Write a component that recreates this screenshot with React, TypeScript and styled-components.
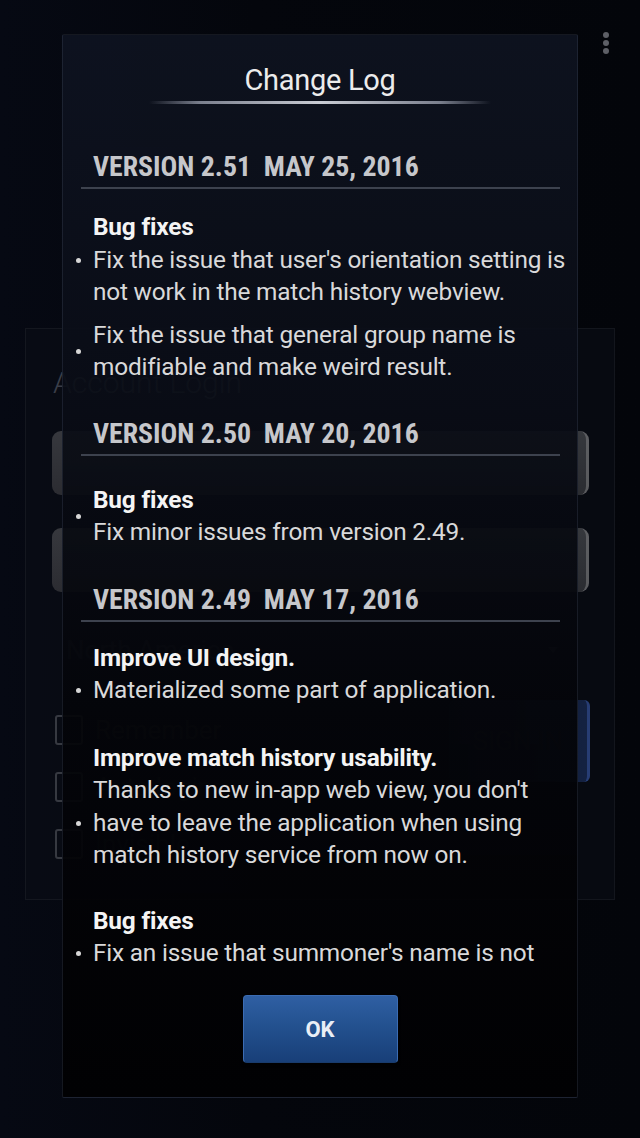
import React from "react";
import styled, { createGlobalStyle } from "styled-components";

const Global = createGlobalStyle`
  html, body { margin: 0; padding: 0; background: #03050a; }
  body { font-family: Roboto, "Noto Sans", "Liberation Sans", sans-serif; }
  #root { width: 640px; }
`;

const Page = styled.div`
  position: relative;
  width: 640px;
  height: 1138px;
  overflow: hidden;
  background: linear-gradient(90deg, #060913 0%, #04060c 40%, #03050a 100%);
  display: flex;
  flex-direction: column;
  align-items: stretch;
`;

const MenuDots = styled.div`
  position: absolute;
  top: 32px;
  right: 31px;
  display: flex;
  flex-direction: column;
  gap: 2px;
`;

const Dot = styled.span`
  width: 6px;
  height: 6px;
  border-radius: 50%;
  background: #5d5f66;
`;

/* ---------- login page behind the dialog ---------- */
const LoginCard = styled.div`
  margin: 328px 25px 0;
  height: 572px;
  box-sizing: border-box;
  border: 1px solid rgba(255, 255, 255, 0.05);
  background: rgba(10, 13, 22, 0.6);
  padding: 36px 26px 0 26px;
  display: flex;
  flex-direction: column;
`;

const LoginTitle = styled.div`
  font-size: 30px;
  font-weight: 300;
  color: #3a3e48;
  line-height: 36px;
  margin-left: 1px;
`;

const Field = styled.div<{ $mt: number }>`
  height: 64px;
  box-sizing: border-box;
  margin-top: ${(p) => p.$mt}px;
  margin-right: -1px;
  border-radius: 9px;
  background: linear-gradient(180deg, rgba(70, 72, 76, 0.75), rgba(55, 56, 60, 0.75));
  border-right: 3px solid rgba(120, 120, 124, 0.6);
`;

const Select = styled.div`
  margin-top: 30px;
  height: 56px;
  display: flex;
  align-items: center;
  justify-content: space-between;
  color: #22252c;
  font-size: 26px;
  padding: 0 14px;
`;

const Caret = styled.span`
  width: 0;
  height: 0;
  border-left: 5px solid transparent;
  border-right: 5px solid transparent;
  border-top: 6px solid #23262d;
  margin-right: 16px;
`;

const OptionsRow = styled.div`
  display: flex;
  justify-content: space-between;
  margin-top: 22px;
`;

const Checks = styled.div`
  display: flex;
  flex-direction: column;
  gap: 27px;
  margin-left: 3px;
  padding-top: 15px;
`;

const CheckRow = styled.div`
  display: flex;
  align-items: center;
  gap: 12px;
  color: #1e2128;
  font-size: 26px;
  line-height: 30px;
`;

const Box = styled.span`
  width: 24px;
  height: 26px;
  border: 2px solid rgba(110, 112, 120, 0.45);
  border-radius: 3px;
`;

const SignIn = styled.div`
  width: 138px;
  height: 82px;
  margin-right: -2px;
  border-radius: 6px;
  background: linear-gradient(90deg, rgba(20, 30, 60, 0.5), rgba(30, 50, 100, 0.6));
  border-right: 3px solid rgba(50, 80, 150, 0.7);
  display: flex;
  align-items: center;
  justify-content: center;
  color: #23262e;
  font-size: 26px;
`;

/* ---------- dialog ---------- */
const Dialog = styled.div`
  position: absolute;
  top: 34px;
  left: 62px;
  width: 516px;
  height: 1064px;
  box-sizing: border-box;
  border: 1px solid rgba(60, 68, 90, 0.35);
  border-radius: 2px;
  background: linear-gradient(
    180deg,
    rgba(14, 19, 32, 0.94) 0%,
    rgba(10, 13, 22, 0.92) 35%,
    rgba(4, 5, 9, 0.93) 65%,
    rgba(1, 1, 3, 0.97) 100%
  );
  display: flex;
  flex-direction: column;
`;

const TitleBlock = styled.div`
  padding-top: 27px;
  display: flex;
  flex-direction: column;
  align-items: center;
`;

const Title = styled.div`
  font-size: 29px;
  line-height: 36px;
  color: #ececec;
  letter-spacing: -0.3px;
`;

const TitleRule = styled.div`
  margin-top: 3px;
  width: 342px;
  height: 3px;
  background: linear-gradient(
    90deg,
    rgba(120, 125, 140, 0) 0%,
    rgba(150, 155, 170, 0.8) 15%,
    #c9ccd4 50%,
    rgba(150, 155, 170, 0.8) 85%,
    rgba(120, 125, 140, 0) 100%
  );
`;

const Scroll = styled.div`
  flex: 1;
  overflow: hidden;
  padding: 46px 6px 0 12px;
  min-height: 0;
`;

const VersionHeader = styled.div<{ $mt: number }>`
  margin: ${(p) => p.$mt}px 11px 0 6px;
  padding: 0 0 3px 12px;
  border-bottom: 2px solid #3d424e;
  font-family: "Roboto Condensed", Roboto, sans-serif;
  font-weight: 700;
  font-size: 27.8px;
  line-height: 34px;
  color: #c6c7cb;
  white-space: pre;
`;

const Entry = styled.div<{ $mt: number }>`
  margin-top: ${(p) => p.$mt}px;
  display: grid;
  grid-template-columns: 18px 1fr;
`;

const Bullet = styled.div<{ $line: number }>`
  padding-top: ${(p) => p.$line * 32.5 + 14}px;
  & > span {
    display: block;
    width: 5px;
    height: 5px;
    border-radius: 50%;
    background: #d6d6d6;
    margin-left: 1px;
  }
`;

const Body = styled.div`
  font-size: 24.4px;
  line-height: 32.5px;
  color: #d9d9da;
  letter-spacing: -0.2px;
`;

const Heading = styled.div`
  font-weight: 700;
  color: #f4f4f4;
`;

const Footer = styled.div`
  height: 124px;
  flex: none;
  display: flex;
  justify-content: center;
  padding-top: 22px;
  box-sizing: border-box;
`;

const OkButton = styled.button`
  width: 155px;
  height: 68px;
  border-radius: 4px;
  border: 1px solid #3b6cb3;
  border-bottom-color: #193b6c;
  background: linear-gradient(180deg, #2f5fa3 0%, #23518f 45%, #183f78 100%);
  box-shadow: 0 2px 3px rgba(0, 0, 0, 0.6);
  color: #e9eef6;
  font-family: Roboto, sans-serif;
  font-weight: 700;
  font-size: 22px;
  padding: 0;
  cursor: pointer;
`;

type Item = { heading: string; lines: string; bullet: number; mt: number };
type Section = { title: string; mt: number; items: Item[] };

const sections: Section[] = [
  {
    title: "VERSION 2.51  MAY 25, 2016",
    mt: 0,
    items: [
      {
        heading: "Bug fixes",
        lines: "Fix the issue that user's orientation setting is not work in the match history webview.",
        bullet: 1,
        mt: 22,
      },
      {
        heading: "",
        lines: "Fix the issue that general group name is modifiable and make weird result.",
        bullet: 0.5,
        mt: 10,
      },
    ],
  },
  {
    title: "VERSION 2.50  MAY 20, 2016",
    mt: 33,
    items: [
      {
        heading: "Bug fixes",
        lines: "Fix minor issues from version 2.49.",
        bullet: 0.5,
        mt: 28,
      },
    ],
  },
  {
    title: "VERSION 2.49  MAY 17, 2016",
    mt: 34,
    items: [
      {
        heading: "Improve UI design.",
        lines: "Materialized some part of application.",
        bullet: 1,
        mt: 20,
      },
      {
        heading: "Improve match history usability.",
        lines:
          "Thanks to new in-app web view, you don't have to leave the application when using match history service from now on.",
        bullet: 2,
        mt: 35,
      },
      {
        heading: "Bug fixes",
        lines: "Fix an issue that summoner's name is not shown correctly in some cases.",
        bullet: 1,
        mt: 33,
      },
    ],
  },
];

export default function App() {
  return (
    <>
      <Global />
      <Page>
        <MenuDots>
          <Dot />
          <Dot />
          <Dot />
        </MenuDots>

        <LoginCard>
          <LoginTitle>Account Login</LoginTitle>
          <Field $mt={30} />
          <Field $mt={33} />
          <Select>
            <span>North America</span>
            <Caret />
          </Select>
          <OptionsRow>
            <Checks>
              <CheckRow>
                <Box />
                Remember
              </CheckRow>
              <CheckRow>
                <Box />
                Auto login
              </CheckRow>
              <CheckRow>
                <Box />
                Invisible
              </CheckRow>
            </Checks>
            <SignIn>SIGN IN</SignIn>
          </OptionsRow>
        </LoginCard>

        <Dialog>
          <TitleBlock>
            <Title>Change Log</Title>
            <TitleRule />
          </TitleBlock>
          <Scroll>
            {sections.map((s) => (
              <div key={s.title}>
                <VersionHeader $mt={s.mt}>{s.title}</VersionHeader>
                {s.items.map((it, i) => (
                  <Entry key={i} $mt={it.mt}>
                    <Bullet $line={it.bullet}>
                      <span />
                    </Bullet>
                    <Body>
                      {it.heading && <Heading>{it.heading}</Heading>}
                      {it.lines}
                    </Body>
                  </Entry>
                ))}
              </div>
            ))}
          </Scroll>
          <Footer>
            <OkButton>OK</OkButton>
          </Footer>
        </Dialog>
      </Page>
    </>
  );
}
